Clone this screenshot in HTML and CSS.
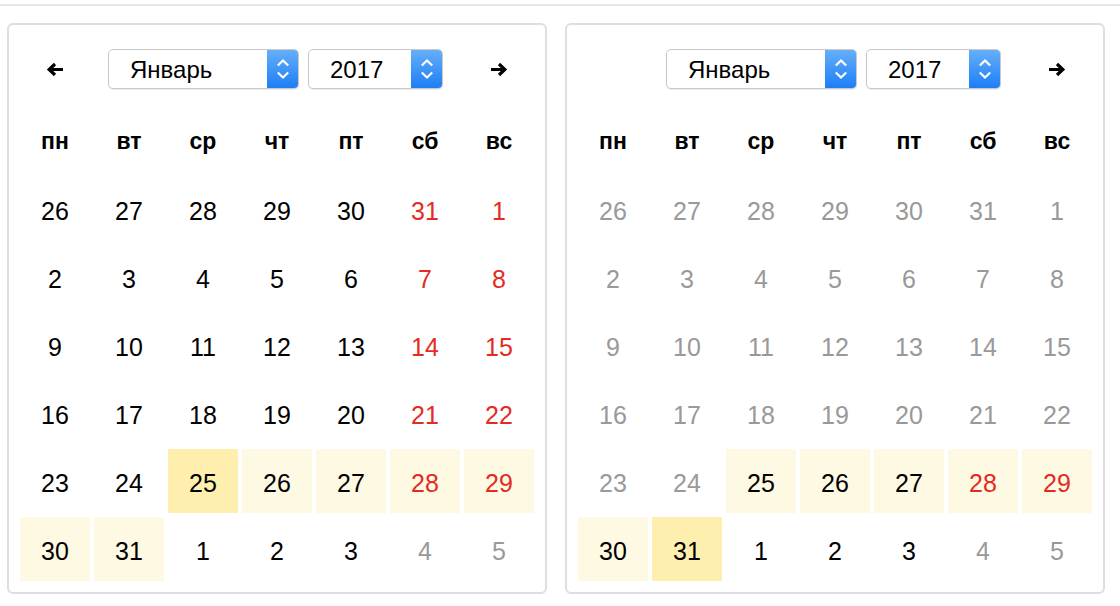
FILE: index.html
```html
<!DOCTYPE html>
<html lang="ru">
<head>
  <meta charset="UTF-8" />
  <title>Календарь</title>
  <link rel="stylesheet" href="styles.css">
</head>
<body>
  <div class="topline"></div>

  <div class="pickers">
    <!-- Left calendar -->
    <div class="calendar">
      <div class="nav">
        <div class="nav-btn">
          <svg width="18" height="15" viewBox="0 0 18 15"><path d="M17 7.5H3.5M9 2L3.2 7.5 9 13" fill="none" stroke="#000" stroke-width="3.2"/></svg>
        </div>
        <div class="nav-selects">
          <div class="select month"><span class="select-text">Январь</span><span class="select-btn"><svg width="14" height="22" viewBox="0 0 14 22"><path d="M1.8 7.5L7 2.5 12.2 7.5M1.8 14.5L7 19.5 12.2 14.5" fill="none" stroke="#fff" stroke-width="2.2"/></svg></span></div>
          <div class="select year"><span class="select-text">2017</span><span class="select-btn"><svg width="14" height="22" viewBox="0 0 14 22"><path d="M1.8 7.5L7 2.5 12.2 7.5M1.8 14.5L7 19.5 12.2 14.5" fill="none" stroke="#fff" stroke-width="2.2"/></svg></span></div>
        </div>
        <div class="nav-btn">
          <svg width="18" height="15" viewBox="0 0 18 15"><path d="M1 7.5h13.5M9 2l5.8 5.5L9 13" fill="none" stroke="#000" stroke-width="3.2"/></svg>
        </div>
      </div>

      <div class="grid">
        <div class="wd">пн</div><div class="wd">вт</div><div class="wd">ср</div><div class="wd">чт</div><div class="wd">пт</div><div class="wd">сб</div><div class="wd">вс</div>

        <div class="day">26</div><div class="day">27</div><div class="day">28</div><div class="day">29</div><div class="day">30</div><div class="day hol">31</div><div class="day hol">1</div>
        <div class="day">2</div><div class="day">3</div><div class="day">4</div><div class="day">5</div><div class="day">6</div><div class="day hol">7</div><div class="day hol">8</div>
        <div class="day">9</div><div class="day">10</div><div class="day">11</div><div class="day">12</div><div class="day">13</div><div class="day hol">14</div><div class="day hol">15</div>
        <div class="day">16</div><div class="day">17</div><div class="day">18</div><div class="day">19</div><div class="day">20</div><div class="day hol">21</div><div class="day hol">22</div>
        <div class="day">23</div><div class="day">24</div><div class="day sel">25</div><div class="day range">26</div><div class="day range">27</div><div class="day range hol">28</div><div class="day range hol">29</div>
        <div class="day range">30</div><div class="day range">31</div><div class="day">1</div><div class="day">2</div><div class="day">3</div><div class="day off">4</div><div class="day off">5</div>
      </div>
    </div>

    <!-- Right calendar -->
    <div class="calendar">
      <div class="nav">
        <div class="nav-btn"></div>
        <div class="nav-selects">
          <div class="select month"><span class="select-text">Январь</span><span class="select-btn"><svg width="14" height="22" viewBox="0 0 14 22"><path d="M1.8 7.5L7 2.5 12.2 7.5M1.8 14.5L7 19.5 12.2 14.5" fill="none" stroke="#fff" stroke-width="2.2"/></svg></span></div>
          <div class="select year"><span class="select-text">2017</span><span class="select-btn"><svg width="14" height="22" viewBox="0 0 14 22"><path d="M1.8 7.5L7 2.5 12.2 7.5M1.8 14.5L7 19.5 12.2 14.5" fill="none" stroke="#fff" stroke-width="2.2"/></svg></span></div>
        </div>
        <div class="nav-btn">
          <svg width="18" height="15" viewBox="0 0 18 15"><path d="M1 7.5h13.5M9 2l5.8 5.5L9 13" fill="none" stroke="#000" stroke-width="3.2"/></svg>
        </div>
      </div>

      <div class="grid">
        <div class="wd">пн</div><div class="wd">вт</div><div class="wd">ср</div><div class="wd">чт</div><div class="wd">пт</div><div class="wd">сб</div><div class="wd">вс</div>

        <div class="day off">26</div><div class="day off">27</div><div class="day off">28</div><div class="day off">29</div><div class="day off">30</div><div class="day off">31</div><div class="day off">1</div>
        <div class="day off">2</div><div class="day off">3</div><div class="day off">4</div><div class="day off">5</div><div class="day off">6</div><div class="day off">7</div><div class="day off">8</div>
        <div class="day off">9</div><div class="day off">10</div><div class="day off">11</div><div class="day off">12</div><div class="day off">13</div><div class="day off">14</div><div class="day off">15</div>
        <div class="day off">16</div><div class="day off">17</div><div class="day off">18</div><div class="day off">19</div><div class="day off">20</div><div class="day off">21</div><div class="day off">22</div>
        <div class="day off">23</div><div class="day off">24</div><div class="day range">25</div><div class="day range">26</div><div class="day range">27</div><div class="day range hol">28</div><div class="day range hol">29</div>
        <div class="day range">30</div><div class="day sel">31</div><div class="day">1</div><div class="day">2</div><div class="day">3</div><div class="day off">4</div><div class="day off">5</div>
      </div>
    </div>
  </div>
</body>
</html>
```

FILE: styles.css
```css
body {
  margin: 0;
  background-color: #fff;
  font-family: "Liberation Sans", Arial, sans-serif;
  color: #000;
}

.topline {
  height: 2px;
  margin-top: 4px;
  background-color: #e6e6e6;
}

.pickers {
  display: flex;
  gap: 18px;
  margin: 17px 0 0 7px;
}

.calendar {
  width: 540px;
  box-sizing: border-box;
  border: 2px solid #dedede;
  border-radius: 6px;
  padding: 11px 11px 11px;
}

.nav {
  display: flex;
  height: 64px;
  gap: 4px;
  margin-bottom: 9px;
}

.nav-btn {
  width: 70px;
  display: flex;
  align-items: center;
  justify-content: center;
  padding-top: 2px;
}

.nav-selects {
  flex: 1;
  display: flex;
  align-items: center;
  justify-content: center;
  gap: 9px;
  padding-right: 3px;
}

.select {
  display: flex;
  height: 40px;
  box-sizing: border-box;
  border: 1px solid #c9c9c9;
  border-radius: 5px;
  box-shadow: 0 1px 1px rgba(0, 0, 0, 0.08);
  overflow: hidden;
  background-color: #fff;
  margin-top: 1px;
}

.select.month {
  width: 191px;
}

.select.year {
  width: 135px;
}

.select-text {
  flex: 1;
  display: flex;
  align-items: center;
  padding-left: 21px;
  padding-top: 2px;
  font-size: 24px;
}

.select-btn {
  width: 32px;
  display: flex;
  align-items: center;
  justify-content: center;
  margin: -1px -1px -1px 0;
  background: linear-gradient(#67b0fb, #1b7df5);
}

.grid {
  display: grid;
  grid-template-columns: repeat(7, 70px);
  grid-auto-rows: 64px;
  column-gap: 4px;
  row-gap: 4px;
}

.wd,
.day {
  display: flex;
  align-items: center;
  justify-content: center;
  padding-top: 5px;
  box-sizing: border-box;
}

.wd {
  font-size: 23px;
  font-weight: bold;
  margin-bottom: 4px;
}

.day {
  font-size: 25px;
}

.day.off {
  color: #999;
}

.day.hol {
  color: #e42b23;
}

.day.range {
  background-color: #fef9e2;
}

.day.sel {
  background-color: #feefae;
}
```
